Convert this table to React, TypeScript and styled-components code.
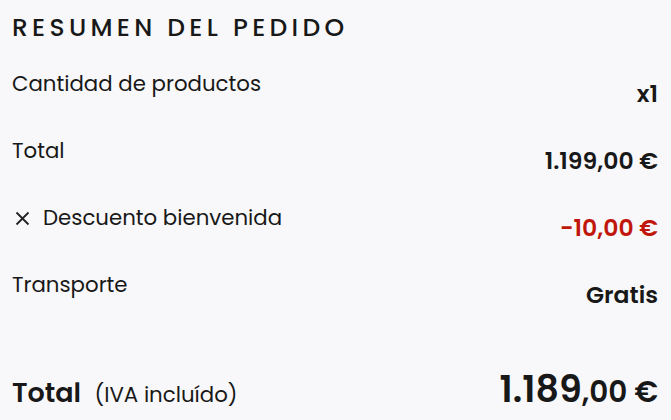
import React from 'react';
import styled, {createGlobalStyle} from 'styled-components';

const GlobalStyle = createGlobalStyle`
  body {
    margin: 0;
    background: #f8f8fa;
    font-family: 'Poppins', 'Open Sans', sans-serif;
    color: #181818;
  }
`;

interface Line {
  label: string;
  value: string;
  discount?: boolean;
}

const lines: Line[] = [
  {label: 'Cantidad de productos', value: 'x1'},
  {label: 'Total', value: '1.199,00 €'},
  {label: 'Descuento bienvenida', value: '-10,00 €', discount: true},
  {label: 'Transporte', value: 'Gratis'},
];

export default function App() {
  return (
    <>
      <GlobalStyle />
      <Summary>
        <Title>RESUMEN DEL PEDIDO</Title>
        <Lines>
          {lines.map((line) => (
            <Row key={line.label}>
              <Label>
                {line.discount && (
                  <svg width="15" height="15" viewBox="0 0 15 15">
                    <path d="M1.5 1.5L13.5 13.5M13.5 1.5L1.5 13.5" stroke="#222" strokeWidth="1.8" />
                  </svg>
                )}
                {line.label}
              </Label>
              <Value $discount={line.discount}>{line.value}</Value>
            </Row>
          ))}
        </Lines>
        <TotalRow>
          <TotalLabel>
            Total <Tax>(IVA incluído)</Tax>
          </TotalLabel>
          <TotalValue>
            1.189<Cents>,00 €</Cents>
          </TotalValue>
        </TotalRow>
      </Summary>
    </>
  );
}

const Summary = styled.div`
  width: 671px;
  height: 420px;
  box-sizing: border-box;
  padding: 12px 13px 0 12px;
`;

const Title = styled.h2`
  margin: 0;
  font-size: 25px;
  font-weight: 500;
  letter-spacing: 4.3px;
  line-height: 32px;
`;

const Lines = styled.div`
  display: flex;
  flex-direction: column;
  gap: 29px;
  margin-top: 26px;
`;

const Row = styled.div`
  display: flex;
  justify-content: space-between;
  align-items: flex-start;
  height: 38px;
`;

const Label = styled.div`
  display: flex;
  align-items: center;
  gap: 13px;
  font-size: 21.3px;
  font-weight: 400;
  line-height: 28px;
  svg {
    margin-left: 3px;
  }
`;

const Value = styled.div<{$discount?: boolean}>`
  margin-top: 10px;
  font-size: 23.5px;
  font-weight: 600;
  line-height: 28px;
  color: ${(p) => (p.$discount ? '#c0160c' : '#181818')};
`;

const TotalRow = styled.div`
  display: flex;
  justify-content: space-between;
  align-items: baseline;
  margin-top: 59px;
  line-height: 44px;
`;

const TotalLabel = styled.div`
  font-size: 27px;
  font-weight: 600;
`;

const Tax = styled.span`
  margin-left: 7px;
  font-size: 21.3px;
  font-weight: 400;
`;

const TotalValue = styled.div`
  font-size: 36.5px;
  font-weight: 600;
`;

const Cents = styled.span`
  font-size: 29.5px;
`;
